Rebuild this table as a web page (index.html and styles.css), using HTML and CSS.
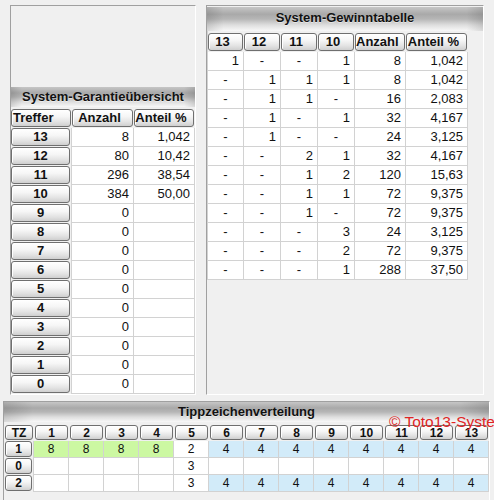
FILE: index.html
```html
<!DOCTYPE html>
<html lang="de">
<head>
<meta charset="utf-8">
<title>Toto13 System</title>
<link rel="stylesheet" href="styles.css">
</head>
<body>
<div class="page">
  <div class="top">
    <section class="panel left">
      <div class="spacer"></div>
      <div class="title">System-Garantieübersicht</div>
      <div class="grid gtable">
        <div class="hcell"><div class="btn hbtn first">Treffer</div></div>
        <div class="hcell"><div class="btn hbtn">Anzahl</div></div>
        <div class="hcell"><div class="btn hbtn">Anteil %</div></div>

        <div class="lcell"><div class="btn">13</div></div><div class="cell num">8</div><div class="cell num">1,042</div>
        <div class="lcell"><div class="btn">12</div></div><div class="cell num">80</div><div class="cell num">10,42</div>
        <div class="lcell"><div class="btn">11</div></div><div class="cell num">296</div><div class="cell num">38,54</div>
        <div class="lcell"><div class="btn">10</div></div><div class="cell num">384</div><div class="cell num">50,00</div>
        <div class="lcell"><div class="btn">9</div></div><div class="cell num">0</div><div class="cell num"></div>
        <div class="lcell"><div class="btn">8</div></div><div class="cell num">0</div><div class="cell num"></div>
        <div class="lcell"><div class="btn">7</div></div><div class="cell num">0</div><div class="cell num"></div>
        <div class="lcell"><div class="btn">6</div></div><div class="cell num">0</div><div class="cell num"></div>
        <div class="lcell"><div class="btn">5</div></div><div class="cell num">0</div><div class="cell num"></div>
        <div class="lcell"><div class="btn">4</div></div><div class="cell num">0</div><div class="cell num"></div>
        <div class="lcell"><div class="btn">3</div></div><div class="cell num">0</div><div class="cell num"></div>
        <div class="lcell"><div class="btn">2</div></div><div class="cell num">0</div><div class="cell num"></div>
        <div class="lcell"><div class="btn">1</div></div><div class="cell num">0</div><div class="cell num"></div>
        <div class="lcell"><div class="btn">0</div></div><div class="cell num">0</div><div class="cell num"></div>
      </div>
    </section>

    <section class="panel right">
      <div class="title wtitle">System-Gewinntabelle</div>
      <div class="grid wtable">
        <div class="hcell"><div class="btn hbtn">13</div></div>
        <div class="hcell"><div class="btn hbtn">12</div></div>
        <div class="hcell"><div class="btn hbtn">11</div></div>
        <div class="hcell"><div class="btn hbtn">10</div></div>
        <div class="hcell"><div class="btn hbtn">Anzahl</div></div>
        <div class="hcell"><div class="btn hbtn">Anteil %</div></div>

        <div class="cell num">1</div><div class="cell dash">-</div><div class="cell dash">-</div><div class="cell num">1</div><div class="cell num">8</div><div class="cell num">1,042</div>
        <div class="cell dash">-</div><div class="cell num">1</div><div class="cell num">1</div><div class="cell num">1</div><div class="cell num">8</div><div class="cell num">1,042</div>
        <div class="cell dash">-</div><div class="cell num">1</div><div class="cell num">1</div><div class="cell dash">-</div><div class="cell num">16</div><div class="cell num">2,083</div>
        <div class="cell dash">-</div><div class="cell num">1</div><div class="cell dash">-</div><div class="cell num">1</div><div class="cell num">32</div><div class="cell num">4,167</div>
        <div class="cell dash">-</div><div class="cell num">1</div><div class="cell dash">-</div><div class="cell dash">-</div><div class="cell num">24</div><div class="cell num">3,125</div>
        <div class="cell dash">-</div><div class="cell dash">-</div><div class="cell num">2</div><div class="cell num">1</div><div class="cell num">32</div><div class="cell num">4,167</div>
        <div class="cell dash">-</div><div class="cell dash">-</div><div class="cell num">1</div><div class="cell num">2</div><div class="cell num">120</div><div class="cell num">15,63</div>
        <div class="cell dash">-</div><div class="cell dash">-</div><div class="cell num">1</div><div class="cell num">1</div><div class="cell num">72</div><div class="cell num">9,375</div>
        <div class="cell dash">-</div><div class="cell dash">-</div><div class="cell num">1</div><div class="cell dash">-</div><div class="cell num">72</div><div class="cell num">9,375</div>
        <div class="cell dash">-</div><div class="cell dash">-</div><div class="cell dash">-</div><div class="cell num">3</div><div class="cell num">24</div><div class="cell num">3,125</div>
        <div class="cell dash">-</div><div class="cell dash">-</div><div class="cell dash">-</div><div class="cell num">2</div><div class="cell num">72</div><div class="cell num">9,375</div>
        <div class="cell dash">-</div><div class="cell dash">-</div><div class="cell dash">-</div><div class="cell num">1</div><div class="cell num">288</div><div class="cell num">37,50</div>
      </div>
    </section>
  </div>

  <section class="panel bottom">
    <div class="title">Tippzeichenverteilung</div>
    <div class="copy">© Toto13-Systeme</div>
    <div class="grid ttable">
      <div class="hcell"><div class="btn tbtn">TZ</div></div>
      <div class="hcell"><div class="btn tbtn">1</div></div>
      <div class="hcell"><div class="btn tbtn">2</div></div>
      <div class="hcell"><div class="btn tbtn">3</div></div>
      <div class="hcell"><div class="btn tbtn">4</div></div>
      <div class="hcell"><div class="btn tbtn">5</div></div>
      <div class="hcell"><div class="btn tbtn">6</div></div>
      <div class="hcell"><div class="btn tbtn">7</div></div>
      <div class="hcell"><div class="btn tbtn">8</div></div>
      <div class="hcell"><div class="btn tbtn">9</div></div>
      <div class="hcell"><div class="btn tbtn">10</div></div>
      <div class="hcell"><div class="btn tbtn">11</div></div>
      <div class="hcell"><div class="btn tbtn">12</div></div>
      <div class="hcell"><div class="btn tbtn">13</div></div>

      <div class="lcell"><div class="btn tbtn">1</div></div>
      <div class="cell c green">8</div><div class="cell c green">8</div><div class="cell c green">8</div><div class="cell c green">8</div>
      <div class="cell c">2</div>
      <div class="cell c blue">4</div><div class="cell c blue">4</div><div class="cell c blue">4</div><div class="cell c blue">4</div>
      <div class="cell c blue">4</div><div class="cell c blue">4</div><div class="cell c blue">4</div><div class="cell c blue">4</div>

      <div class="lcell"><div class="btn tbtn">0</div></div>
      <div class="cell c"></div><div class="cell c"></div><div class="cell c"></div><div class="cell c"></div>
      <div class="cell c">3</div>
      <div class="cell c"></div><div class="cell c"></div><div class="cell c"></div><div class="cell c"></div>
      <div class="cell c"></div><div class="cell c"></div><div class="cell c"></div><div class="cell c"></div>

      <div class="lcell"><div class="btn tbtn">2</div></div>
      <div class="cell c"></div><div class="cell c"></div><div class="cell c"></div><div class="cell c"></div>
      <div class="cell c">3</div>
      <div class="cell c blue">4</div><div class="cell c blue">4</div><div class="cell c blue">4</div><div class="cell c blue">4</div>
      <div class="cell c blue">4</div><div class="cell c blue">4</div><div class="cell c blue">4</div><div class="cell c blue">4</div>
    </div>
  </section>
</div>
</body>
</html>
```

FILE: styles.css
```css
* { box-sizing: border-box; }
html, body { margin: 0; padding: 0; }
body {
  background: #f0f0f0;
  font-family: "Liberation Sans", Arial, sans-serif;
  font-size: 13px;
  color: #111;
}
.page {
  width: 494px;
  height: 500px;
  overflow: hidden;
}
.top {
  display: flex;
  gap: 10px;
  padding: 5px 0 0 10px;
  height: 401px;
}
.panel {
  border: 1px solid;
  border-color: #a0a0a0 #ffffff #ffffff #a0a0a0;
  background: #f0f0f0;
}
.left {
  width: 186px;
  height: 390px;
  display: flex;
  flex-direction: column;
}
.spacer { flex: 1; }
.right {
  width: 278px;
  height: 390px;
}
.bottom {
  position: relative;
  margin-left: 3px;
  width: 487px;
  height: 110px;
}

.title {
  height: 20px;
  line-height: 20px;
  text-align: center;
  font-weight: bold;
  font-size: 13px;
  color: #111;
  text-shadow: 0 1px 0 rgba(255, 255, 255, 0.5);
  background:
    linear-gradient(to right, rgba(0,0,0,0.12), rgba(0,0,0,0) 6%, rgba(0,0,0,0) 94%, rgba(0,0,0,0.12)),
    linear-gradient(to bottom, #c6c6c6 0%, #a9a9a9 30%, #b6b6b6 50%, #dedede 75%, #f8f8f8 100%);
}
.wtitle {
  height: 24px;
  line-height: 22px;
  margin-top: 1px;
}

.grid { display: grid; }
.gtable {
  grid-template-columns: 61px 62px 61px;
  grid-template-rows: 21px;
  grid-auto-rows: 19px;
  background: #f0f0f0;
}
.wtable {
  width: 261px;
  grid-template-columns: 36px 37px 37px 37px 51px 62px;
  grid-template-rows: 21px;
  grid-auto-rows: 19px;
  border-left: 1px solid #d2d2d2;
}
.ttable {
  grid-template-columns: 30px repeat(13, 35px);
  grid-template-rows: 19px;
  grid-auto-rows: 17px;
  font-size: 12px;
}

.hcell {
  padding: 2px 1px 1px 0;
  background: #f0f0f0;
}
.ttable .hcell { padding: 3px 1px 1px 1px; }
.lcell {
  padding: 0 1px 1px 0;
  border-right: 1px solid #d2d2d2;
  background: #f0f0f0;
}
.ttable .lcell { padding: 0 1px 1px 1px; }

.btn {
  height: 100%;
  border: 1px solid #6f6f6f;
  border-radius: 3px;
  background: linear-gradient(to bottom, #ffffff 0%, #f6f6f6 40%, #e2e2e2 75%, #cfcfcf 100%);
  box-shadow: inset 1px 1px 0 #ffffff;
  font-weight: bold;
  text-align: center;
  color: #111;
  font-size: 13px;
  line-height: 16px;
  white-space: nowrap;
  overflow: hidden;
}
.hbtn { padding-right: 6px; }
.hbtn.first { text-align: left; padding-left: 1px; padding-right: 0; }
.tbtn { font-size: 12px; line-height: 14px; }

.cell {
  background: #fff;
  border-right: 1px solid #d2d2d2;
  border-bottom: 1px solid #d2d2d2;
  line-height: 18px;
  white-space: nowrap;
}
.num { text-align: right; padding-right: 4px; }
.dash { text-align: center; }
.c { text-align: center; line-height: 16px; }
.green { background: #ccf8a2; }
.blue { background: #d2ebf9; }

.copy {
  position: absolute;
  top: 11px;
  left: 385px;
  z-index: 2;
  color: #e02424;
  font-size: 15.5px;
  line-height: 17px;
  white-space: nowrap;
}
```
